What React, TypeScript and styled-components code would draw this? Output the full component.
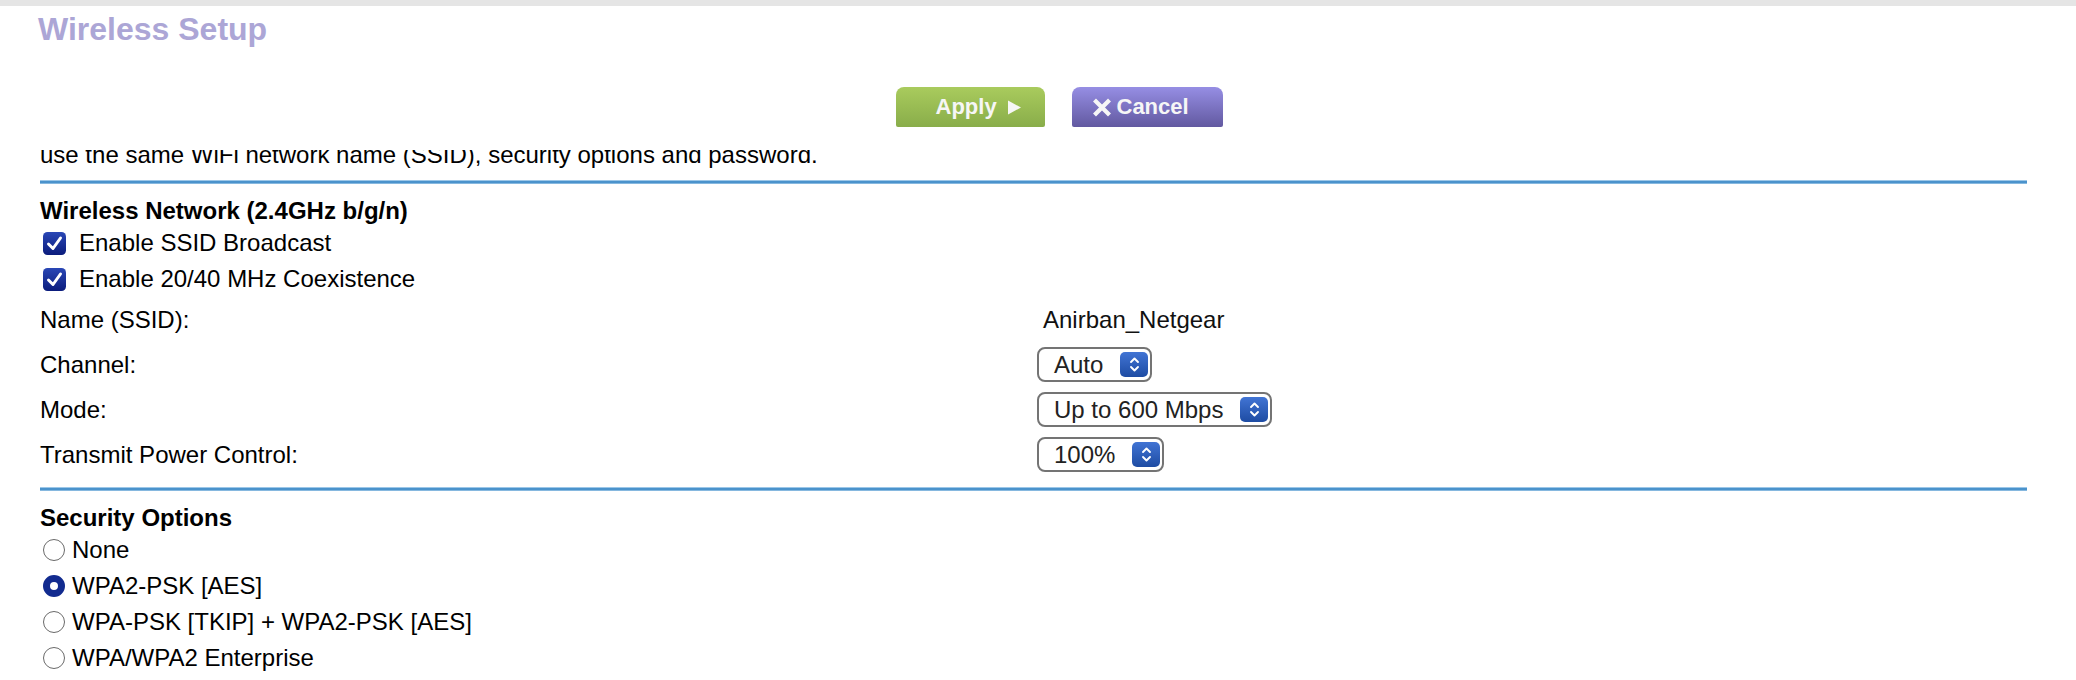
import { useLayoutEffect, useRef } from "react"
import styled, { createGlobalStyle } from "styled-components"

const GlobalStyle = createGlobalStyle`
	html, body {
		margin: 0;
		padding: 0;
		background: #ffffff;
	}
	body {
		font-family: "Liberation Sans", Arial, Helvetica, sans-serif;
		color: #000;
		overflow: hidden;
	}
`

const Page = styled.div`
	width: 100vw;
	height: 100vh;
	display: flex;
	flex-direction: column;
`

const TopStrip = styled.div`
	height: 6px;
	flex-shrink: 0;
	background: #e5e5e5;
`

const Header = styled.header`
	height: 144px;
	flex-shrink: 0;
	display: flex;
	flex-direction: column;
	padding-left: 38px;
	box-sizing: border-box;
`

const Title = styled.h1`
	margin: 5px 0 0;
	font-size: 32px;
	line-height: 36px;
	font-weight: bold;
	color: #aca6d6;
`

const ButtonBar = styled.div`
	display: flex;
	justify-content: center;
	gap: 27px;
	margin-top: 40px;
	padding-left: 4px;
`

const ActionButton = styled.button<{ $variant: "apply" | "cancel" }>`
	display: flex;
	align-items: center;
	gap: ${p => p.$variant === "apply" ? "10px" : "5px"};
	width: ${p => p.$variant === "apply" ? "149px" : "151px"};
	height: 40px;
	box-sizing: border-box;
	padding: 0 0 0 ${p => p.$variant === "apply" ? "40px" : "20px"};
	border: none;
	border-radius: 8px 8px 2px 2px;
	background: ${p => p.$variant === "apply"
		? "linear-gradient(#a9cb5d, #89ad4a)"
		: "linear-gradient(#968ee4, #6259a0)"};
	color: #f6f6f6;
	font-family: inherit;
	font-size: 22px;
	font-weight: bold;
	cursor: pointer;
`

const Pane = styled.div`
	flex: 1;
	overflow: hidden;
	padding: 0 49px 40px 40px;
`

const Intro = styled.p`
	margin: 0;
	font-size: 24px;
	line-height: 28px;
	white-space: nowrap;
`

const Rule = styled.div<{ $space: number }>`
	height: 4px;
	margin-top: ${p => p.$space}px;
	background: linear-gradient(#9cc7e8 0 1px, #4b93cc 1px 3px, #86b8df 3px 4px);
`

const SectionTitle = styled.h2`
	margin: 13px 0 0;
	font-size: 24px;
	line-height: 28px;
	font-weight: bold;
`

const CheckRow = styled.label`
	display: flex;
	align-items: center;
	gap: 13px;
	height: 36px;
	padding-left: 3px;
	font-size: 24px;
	line-height: 28px;
`

const RadioRow = styled.label`
	display: flex;
	align-items: center;
	gap: 7px;
	height: 36px;
	padding-left: 3px;
	font-size: 24px;
	line-height: 28px;
`

const RadioDot = styled.span<{ $checked?: boolean }>`
	width: 22px;
	height: 22px;
	box-sizing: border-box;
	border-radius: 50%;
	background: #fff;
	border: ${p => p.$checked ? "7.5px solid #122b8f" : "1.6px solid #6a6a6a"};
	flex-shrink: 0;
`

const FieldRow = styled.div`
	display: grid;
	grid-template-columns: 997px auto;
	align-items: center;
	height: 45px;
	font-size: 24px;
	line-height: 28px;
`

const FieldValue = styled.span`
	padding-left: 6px;
	color: #111;
`

const SelectBox = styled.div`
	justify-self: start;
	display: inline-flex;
	align-items: center;
	gap: 17px;
	height: 35px;
	box-sizing: border-box;
	padding: 0 2px 0 15px;
	border: 2px solid #747474;
	border-radius: 8px;
	color: #222;
	font-size: 24px;
`

const SelectArrows = styled.span`
	display: flex;
	align-items: center;
	justify-content: center;
	width: 28px;
	height: 25px;
	border-radius: 5px;
	background: linear-gradient(#4174d4, #1e4ca3);
`

function CheckBox() {
	return (
		<svg width="23" height="23" viewBox="0 0 23 23">
			<defs>
				<linearGradient id="cb" x1="0" y1="0" x2="0" y2="1">
					<stop offset="0" stopColor="#2a47b6" />
					<stop offset="1" stopColor="#0b1c7c" />
				</linearGradient>
			</defs>
			<rect x="0" y="0" width="23" height="23" rx="4.5" fill="url(#cb)" />
			<path d="M5.5 12 L10 16.5 L17.5 6" fill="none" stroke="#fff" strokeWidth="3" strokeLinecap="round" strokeLinejoin="round" />
		</svg>
	)
}

function Select({ value }: { value: string }) {
	return (
		<SelectBox>
			<span>{value}</span>
			<SelectArrows>
				<svg width="11" height="17" viewBox="0 0 11 17">
					<path d="M2 6 L5.5 2.5 L9 6 M2 11 L5.5 14.5 L9 11" fill="none" stroke="#fff" strokeWidth="1.9" strokeLinecap="round" strokeLinejoin="round" />
				</svg>
			</SelectArrows>
		</SelectBox>
	)
}

const securityOptions = [
	{ label: "None", checked: false },
	{ label: "WPA2-PSK [AES]", checked: true },
	{ label: "WPA-PSK [TKIP] + WPA2-PSK [AES]", checked: false },
	{ label: "WPA/WPA2 Enterprise", checked: false },
]

export default function App() {
	const paneRef = useRef<HTMLDivElement>(null)

	// the settings page is shown scrolled a little, first line half hidden
	useLayoutEffect(() => {
		if (paneRef.current) paneRef.current.scrollTop = 9
	}, [])

	return (
		<Page>
			<GlobalStyle />
			<TopStrip />
			<Header>
				<Title>Wireless Setup</Title>
				<ButtonBar>
					<ActionButton $variant="apply">
						Apply
						<svg width="14" height="15" viewBox="0 0 14 15">
							<polygon points="1,0.5 14,7.5 1,14.5" fill="#f6f6f6" />
						</svg>
					</ActionButton>
					<ActionButton $variant="cancel">
						<svg width="20" height="19" viewBox="0 0 20 19">
							<path d="M2.5 2 L17.5 17 M17.5 2 L2.5 17" stroke="#f6f6f6" strokeWidth="4.2" />
						</svg>
						Cancel
					</ActionButton>
				</ButtonBar>
			</Header>
			<Pane ref={paneRef}>
				<Intro>use the same WiFi network name (SSID), security options and password.</Intro>
				<Rule $space={11} />
				<SectionTitle>Wireless Network (2.4GHz b/g/n)</SectionTitle>
				<CheckRow><CheckBox />Enable SSID Broadcast</CheckRow>
				<CheckRow><CheckBox />Enable 20/40 MHz Coexistence</CheckRow>
				<FieldRow>
					<span>Name (SSID):</span>
					<FieldValue>Anirban_Netgear</FieldValue>
				</FieldRow>
				<FieldRow>
					<span>Channel:</span>
					<Select value="Auto" />
				</FieldRow>
				<FieldRow>
					<span>Mode:</span>
					<Select value="Up to 600 Mbps" />
				</FieldRow>
				<FieldRow>
					<span>Transmit Power Control:</span>
					<Select value="100%" />
				</FieldRow>
				<Rule $space={10} />
				<SectionTitle>Security Options</SectionTitle>
				{securityOptions.map(o => (
					<RadioRow key={o.label}>
						<RadioDot $checked={o.checked} />
						{o.label}
					</RadioRow>
				))}
			</Pane>
		</Page>
	)
}
